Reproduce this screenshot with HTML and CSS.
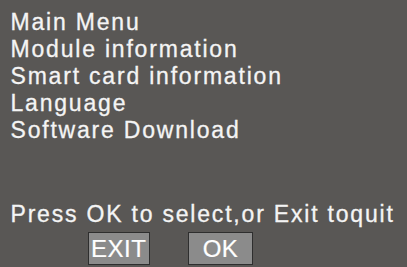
FILE: index.html
```html
<!DOCTYPE html>
<html>
<head>
<meta charset="utf-8">
<link rel="stylesheet" href="styles.css">
</head>
<body>
<div class="screen">
  <div class="menu">
    <div class="item">Main Menu</div>
    <div class="item">Module information</div>
    <div class="item">Smart card information</div>
    <div class="item">Language</div>
    <div class="item">Software Download</div>
  </div>
  <div class="hint">Press OK to select,or Exit toquit</div>
  <div class="buttons">
    <div class="btn btn-exit">EXIT</div>
    <div class="btn btn-ok">OK</div>
  </div>
</div>
</body>
</html>
```
FILE: styles.css
```css
html, body {
  margin: 0;
  padding: 0;
  background: #595755;
}
.screen {
  width: 407px;
  height: 267px;
  box-sizing: border-box;
  padding: 9px 0 0 10.5px;
  display: flex;
  flex-direction: column;
  font-family: "Liberation Sans", Arial, sans-serif;
  color: #f4f4f4;
  overflow: hidden;
}
.menu {
  display: flex;
  flex-direction: column;
}
.item, .hint {
  font-size: 23px;
  line-height: 27px;
  letter-spacing: 1.8px;
  white-space: nowrap;
  -webkit-text-stroke: 0.3px currentColor;
}
.hint {
  margin-top: 57px;
}
.buttons {
  display: flex;
  gap: 38px;
  margin: 4px 0 0 77.5px;
}
.btn {
  box-sizing: border-box;
  height: 33px;
  padding-top: 1px;
  border: 1px solid #2e2e2e;
  background: #8b8b8b;
  color: #ffffff;
  font-size: 24px;
  line-height: 30px;
  letter-spacing: 0.5px;
  display: flex;
  justify-content: center;
  align-items: center;
  -webkit-text-stroke: 0.2px currentColor;
}
.btn-exit {
  width: 62px;
  justify-content: flex-start;
  padding-left: 2px;
}
.btn-ok {
  width: 65px;
}
```
